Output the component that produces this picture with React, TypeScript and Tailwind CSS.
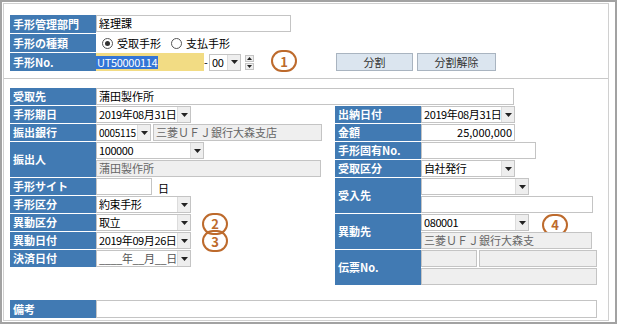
import type { ReactNode } from 'react'

function Label({ children, tall = false }: { children: ReactNode; tall?: boolean }) {
  return (
    <div
      className={`w-[86px] shrink-0 bg-[#417ab3] text-white text-[11px] font-bold px-[3px] flex items-center leading-none ${
        tall ? 'h-[35px]' : 'h-full'
      }`}
    >
      {children}
    </div>
  )
}

function Arrow() {
  return (
    <span className="w-[13px] h-full shrink-0 flex items-center justify-center bg-[#eeeeee] border-l border-[#dcdcdc]">
      <svg width="7" height="4" viewBox="0 0 7 4">
        <path d="M0 0h7L3.5 4z" fill="#222" />
      </svg>
    </span>
  )
}

function Select({ value, w, muted = false, tc = 'text-[11px] tracking-[-0.4px]' }: { value?: string; w: string; muted?: boolean; tc?: string }) {
  return (
    <div className={`${w} h-[17px] shrink-0 flex items-stretch border border-[#c4c4c4] bg-white`}>
      <span className={`flex-1 flex items-center pl-[2px] ${tc} leading-none whitespace-nowrap overflow-hidden ${muted ? 'text-[#555]' : 'text-black'}`}>
        {value}
      </span>
      <Arrow />
    </div>
  )
}

function Input({ value, w, readOnly = false, right = false }: { value?: string; w: string; readOnly?: boolean; right?: boolean }) {
  return (
    <div
      className={`${w} h-[17px] shrink-0 flex items-center border border-[#c4c4c4] px-[2px] text-[11px] leading-none whitespace-nowrap overflow-hidden ${
        readOnly ? 'bg-[#efefef] text-[#666]' : 'bg-white text-black'
      } ${right ? 'justify-end' : ''}`}
    >
      {value}
    </div>
  )
}

function Marker({ n }: { n: string }) {
  return (
    <span className="w-[26px] h-[22px] shrink-0 rounded-full border-2 border-[#bd6a2c] text-[#bd6a2c] text-[13px] font-bold flex items-center justify-center leading-none">
      {n}
    </span>
  )
}

function Radio({ checked }: { checked?: boolean }) {
  return (
    <span className="w-[11px] h-[11px] rounded-full border border-[#555] bg-white flex items-center justify-center">
      {checked && <span className="w-[5px] h-[5px] rounded-full bg-[#333]" />}
    </span>
  )
}

export default function App() {
  return (
    <div className="w-[617px] h-[324px] bg-white border-2 border-[#a2a2a2] pt-[1px] pl-[1px] pr-[6px] pb-[1px] font-['Noto_Sans_CJK_JP',sans-serif] overflow-hidden">
      <div className="h-full border border-[#d0d0d0] pt-[11px] pl-[6px]">
        {/* 上段 */}
        <div className="flex flex-col gap-px">
          <div className="flex h-[18px]">
            <Label>手形管理部門</Label>
            <Input value="経理課" w="w-[195px]" />
          </div>
          <div className="flex h-[18px] items-center">
            <Label>手形の種類</Label>
            <div className="flex items-center gap-[4px] pl-[6px] text-[11px] leading-none">
              <Radio checked />
              <span>受取手形</span>
              <span className="ml-[6px]"><Radio /></span>
              <span>支払手形</span>
            </div>
          </div>
          <div className="flex h-[18px] items-center">
            <Label>手形No.</Label>
            <div className="w-[108px] h-[18px] shrink-0 bg-[#f2dc84] flex items-center overflow-hidden">
              <span className="bg-[#3375d6] text-white text-[11px] tracking-[-0.3px] leading-[13px] px-[1px]">UT50000114</span>
            </div>
            <span className="w-[5px] text-[11px] leading-none">-</span>
            <Select value="00" w="w-[32px]" />
            <div className="ml-[4px] w-[9px] h-[15px] flex flex-col gap-px">
              <span className="flex-1 bg-[#eeeeee] border border-[#c4c4c4] flex items-center justify-center">
                <svg width="5" height="3" viewBox="0 0 5 3"><path d="M0 3h5L2.5 0z" fill="#222" /></svg>
              </span>
              <span className="flex-1 bg-[#eeeeee] border border-[#c4c4c4] flex items-center justify-center">
                <svg width="5" height="3" viewBox="0 0 5 3"><path d="M0 0h5L2.5 3z" fill="#222" /></svg>
              </span>
            </div>
            <span className="ml-[17px] mt-[-2px]"><Marker n="1" /></span>
            <button className="ml-[39px] w-[77px] h-[18px] bg-[#dbe5ef] border border-[#a9b4c0] text-[11px] text-[#333] leading-none">分割</button>
            <button className="ml-[4px] w-[79px] h-[18px] bg-[#dbe5ef] border border-[#a9b4c0] text-[11px] text-[#333] leading-none">分割解除</button>
          </div>
        </div>

        <div className="mt-[7px] ml-[-6px] h-px bg-[#c8c8c8]" />

        {/* 下段 */}
        <div className="mt-[9px] flex flex-col gap-px">
          <div className="flex h-[17px]">
            <Label>受取先</Label>
            <Input value="蒲田製作所" w="w-[418px]" />
          </div>
          <div className="flex">
            {/* 左列 */}
            <div className="w-[311px] flex flex-col gap-px">
              <div className="flex h-[17px]">
                <Label>手形期日</Label>
                <Select value="2019年08月31日" w="w-[95px]" />
              </div>
              <div className="flex h-[17px]">
                <Label>振出銀行</Label>
                <Select value="0005115" w="w-[55px]" tc="text-[10px] tracking-[-0.3px]" />
                <span className="ml-[2px]"><Input value="三菱ＵＦＪ銀行大森支店" w="w-[169px]" readOnly /></span>
              </div>
              <div className="flex h-[35px]">
                <Label tall>振出人</Label>
                <div className="flex flex-col gap-px">
                  <Select value="100000" w="w-[108px]" />
                  <Input value="蒲田製作所" w="w-[225px]" readOnly />
                </div>
              </div>
              <div className="flex h-[17px] items-center">
                <Label>手形サイト</Label>
                <Input w="w-[56px]" />
                <span className="ml-[6px] text-[11px] leading-none mt-[4px]">日</span>
              </div>
              <div className="flex h-[17px]">
                <Label>手形区分</Label>
                <Select value="約束手形" w="w-[95px]" />
              </div>
              <div className="flex h-[17px] items-center">
                <Label>異動区分</Label>
                <Select value="取立" w="w-[95px]" />
                <span className="ml-[11px] mt-[2px] relative z-10"><Marker n="2" /></span>
              </div>
              <div className="flex h-[17px] items-center">
                <Label>異動日付</Label>
                <Select value="2019年09月26日" w="w-[95px]" />
                <span className="ml-[11px] mt-[1px]"><Marker n="3" /></span>
              </div>
              <div className="flex h-[17px]">
                <Label>決済日付</Label>
                <Select value="____年__月__日" w="w-[95px]" muted />
              </div>
            </div>

            {/* 右列 */}
            <div className="ml-[14px] flex flex-col gap-px">
              <div className="flex h-[17px]">
                <Label>出納日付</Label>
                <Select value="2019年08月31日" w="w-[94px]" />
              </div>
              <div className="flex h-[17px]">
                <Label>金額</Label>
                <Input value="25,000,000" w="w-[94px]" right />
              </div>
              <div className="flex h-[17px]">
                <Label>手形固有No.</Label>
                <Input w="w-[115px]" />
              </div>
              <div className="flex h-[17px]">
                <Label>受取区分</Label>
                <Select value="自社発行" w="w-[94px]" />
              </div>
              <div className="flex h-[35px]">
                <Label tall>受入先</Label>
                <div className="flex flex-col gap-px">
                  <Select w="w-[108px]" />
                  <Input w="w-[172px]" />
                </div>
              </div>
              <div className="flex h-[35px]">
                <Label tall>異動先</Label>
                <div className="flex flex-col gap-px">
                  <div className="flex h-[17px] items-center">
                    <Select value="080001" w="w-[108px]" />
                    <span className="ml-[13px] -my-[3px] mt-[1px]"><Marker n="4" /></span>
                  </div>
                  <Input value="三菱ＵＦＪ銀行大森支" w="w-[171px]" readOnly />
                </div>
              </div>
              <div className="flex h-[35px]">
                <Label tall>伝票No.</Label>
                <div className="flex flex-col gap-px">
                  <div className="flex gap-[2px]">
                    <Input w="w-[56px]" readOnly />
                    <Input w="w-[118px]" readOnly />
                  </div>
                  <Input w="w-[176px]" readOnly />
                </div>
              </div>
            </div>
          </div>
        </div>

        <div className="mt-[15px] flex h-[18px]">
          <Label>備考</Label>
          <Input w="w-[501px] !h-[18px]" />
        </div>
      </div>
    </div>
  )
}
